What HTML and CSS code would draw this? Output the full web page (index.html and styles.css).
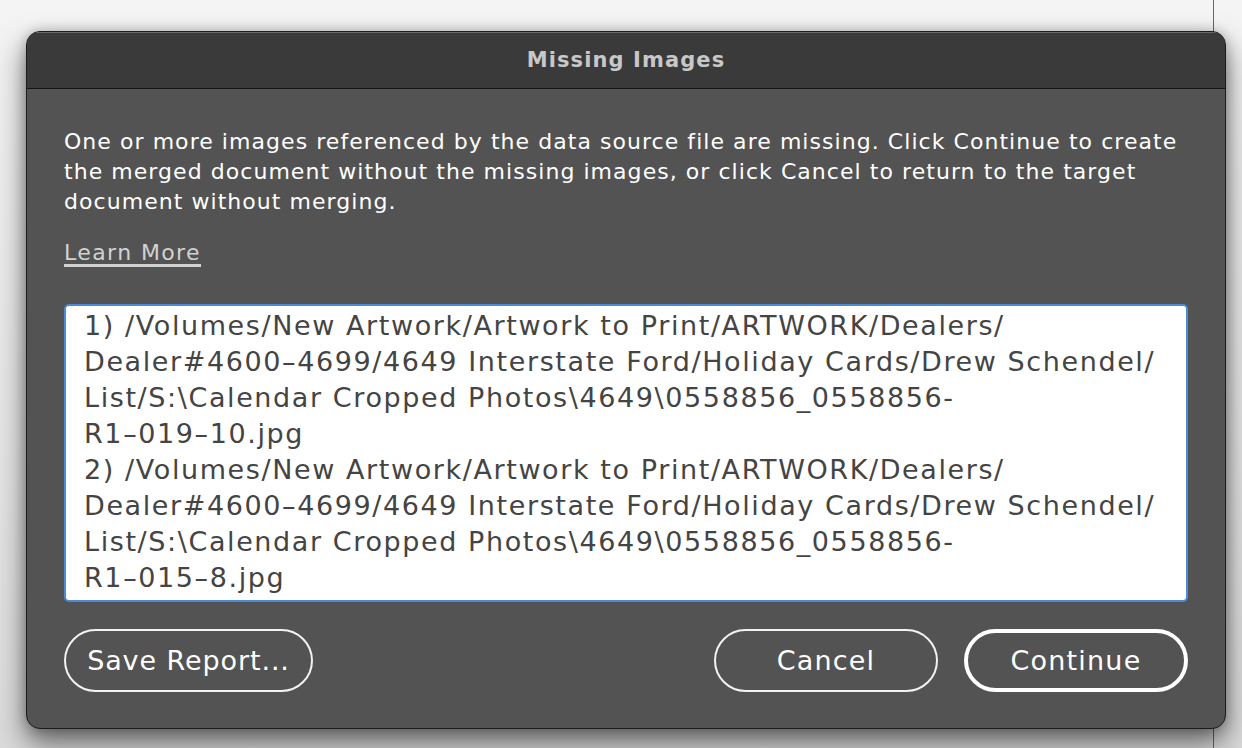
FILE: index.html
```html
<!DOCTYPE html>
<html>
<head>
<meta charset="utf-8">
<link rel="stylesheet" href="styles.css">
</head>
<body>
<div class="guide"></div>
<div class="dialog">
  <div class="titlebar">Missing Images</div>
  <div class="content">
    <p class="message">One or more images referenced by the data source file are missing. Click Continue to create the merged document without the missing images, or click Cancel to return to the target document without merging.</p>
    <a class="learn">Learn More</a>
    <div class="list">
      <div class="line">1) /Volumes/New Artwork/Artwork to Print/ARTWORK/Dealers/</div>
      <div class="line">Dealer#4600–4699/4649 Interstate Ford/Holiday Cards/Drew Schendel/</div>
      <div class="line">List/S:\Calendar Cropped Photos\4649\0558856_0558856-</div>
      <div class="line">R1–019–10.jpg</div>
      <div class="line">2) /Volumes/New Artwork/Artwork to Print/ARTWORK/Dealers/</div>
      <div class="line">Dealer#4600–4699/4649 Interstate Ford/Holiday Cards/Drew Schendel/</div>
      <div class="line">List/S:\Calendar Cropped Photos\4649\0558856_0558856-</div>
      <div class="line">R1–015–8.jpg</div>
    </div>
    <div class="buttons">
      <button class="btn save">Save Report...</button>
      <div class="right">
        <button class="btn cancel">Cancel</button>
        <button class="btn default">Continue</button>
      </div>
    </div>
  </div>
</div>
</body>
</html>
```
FILE: styles.css
```css
html, body {
  margin: 0;
  padding: 0;
}
body {
  width: 1242px;
  height: 748px;
  overflow: hidden;
  position: relative;
  background: linear-gradient(#f5f5f5 0px, #f0f0f0 60px, #e6e6e6 400px, #dadada 748px);
  font-family: "DejaVu Sans", "Liberation Sans", sans-serif;
  padding-top: 31px;
  padding-left: 26px;
  box-sizing: border-box;
}
.guide {
  position: absolute;
  left: 1213px;
  top: 0;
  width: 1px;
  height: 748px;
  background: #8e3fd6;
  z-index: 0;
}
.dialog {
  position: relative;
  z-index: 1;
  width: 1200px;
  height: 698px;
  box-sizing: border-box;
  background: #535353;
  border: 1px solid #1c1c1c;
  border-radius: 14px;
  overflow: hidden;
  box-shadow: 0 14px 28px rgba(0,0,0,0.55), 0 0 12px rgba(0,0,0,0.22);
}
.titlebar {
  height: 56px;
  background: #3a3a3a;
  border-bottom: 1px solid #141414;
  box-shadow: inset 0 1px 0 #6a6a6a;
  display: flex;
  align-items: center;
  justify-content: center;
  color: #c8c8c8;
  font-weight: bold;
  font-size: 21px;
  letter-spacing: 1.1px;
}
.content {
  padding: 38px 37px 0 37px;
  display: flex;
  flex-direction: column;
  align-items: flex-start;
}
.message {
  margin: 0;
  color: #ffffff;
  font-size: 22px;
  letter-spacing: 1.05px;
  line-height: 30px;
}
.learn {
  margin-top: 21px;
  color: #d2d2d2;
  font-size: 22px;
  letter-spacing: 1.4px;
  line-height: 30px;
  text-decoration: underline;
  text-decoration-thickness: 3px;
  text-underline-offset: 4px;
}
.list {
  margin-top: 36px;
  width: 1124px;
  height: 298px;
  box-sizing: border-box;
  background: #ffffff;
  border: 2px solid #4a8ad6;
  border-radius: 5px;
  padding: 2px 18px;
  color: #444444;
  font-size: 27px;
  letter-spacing: 1.6px;
  line-height: 36px;
  white-space: nowrap;
  overflow: hidden;
}
.buttons {
  margin-top: 27px;
  width: 1124px;
  display: flex;
  justify-content: space-between;
}
.right {
  display: flex;
  gap: 26px;
}
.btn {
  height: 63px;
  box-sizing: border-box;
  border-radius: 32px;
  background: transparent;
  border: 2px solid #f2f2f2;
  color: #ffffff;
  font-family: "DejaVu Sans", "Liberation Sans", sans-serif;
  font-size: 27px;
  letter-spacing: 1.2px;
  padding: 0;
}
.save { width: 249px; letter-spacing: 0.9px; }
.cancel { width: 224px; }
.default { width: 224px; border: 4px solid #ffffff; }
```
